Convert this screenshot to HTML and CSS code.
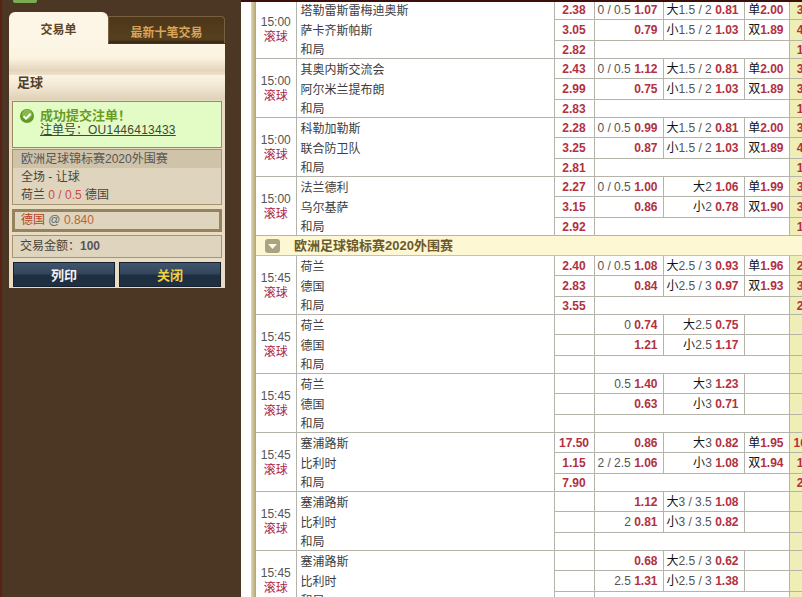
FILE: index.html
```html
<!DOCTYPE html>
<html lang="zh-CN">
<head>
    <meta charset="UTF-8">
    <title>交易单</title>
    <link rel="stylesheet" href="styles.css">
</head>
<body>
    <div class="page">
        <aside class="sidebar">
            <div class="top-tag"></div>
            <div class="tabs">
                <div class="tab tab-active">交易单</div>
                <div class="tab tab-other">最新十笔交易</div>
            </div>
            <div class="panel">
                <div class="panel-fade"></div>
                <h2 class="sport">足球</h2>

                <div class="box success">
                    <svg class="check" width="14" height="14" viewBox="0 0 14 14">
                        <circle cx="7" cy="7" r="7" fill="#5f9a22"/>
                        <circle cx="7" cy="5.5" r="5" fill="#86ba48"/>
                        <path d="M3.6 7.2 L6 9.6 L10.6 4.8" fill="none" stroke="#fff" stroke-width="2"/>
                    </svg>
                    <div>
                        <div class="success-title">成功提交注单！</div>
                        <div class="success-no">注单号：<span class="order-no">OU1446413433</span></div>
                    </div>
                </div>

                <div class="box info">
                    <div class="info-head">欧洲足球锦标赛2020外围赛</div>
                    <div class="info-line">全场 - 让球</div>
                    <div class="info-line">荷兰 <span class="hdp-red">0 / 0.5</span> 德国</div>
                </div>

                <div class="box pick">
                    <span class="pick-team">德国</span> <span class="pick-at">@</span> <span class="pick-odds">0.840</span>
                </div>

                <div class="box amount">交易金额：<b>100</b></div>

                <div class="buttons">
                    <button class="btn">列印</button>
                    <button class="btn btn-close">关闭</button>
                </div>
            </div>
        </aside>

        <main class="main">
            <div class="edge"></div>
            <div class="board">
                <table class="odds">
                    <colgroup>
                        <col class="c-time"><col class="c-team"><col class="c-odds"><col class="c-hdp"><col class="c-ou"><col class="c-oe"><col class="c-last">
                    </colgroup>
                    <tbody>
                        <tr class="r1">
                            <td class="time" rowspan="3">15:00<br><span class="live">滚球</span></td>
                            <td class="team">塔勒雷斯雷梅迪奥斯</td>
                            <td class="win">2.38</td>
                            <td class="num">0 / 0.5 <b>1.07</b></td>
                            <td class="num"><i>大</i>1.5 / 2 <b>0.81</b></td>
                            <td class="num"><i>单</i><b>2.00</b></td>
                            <td class="last">3.40</td>
                        </tr>
                        <tr class="r2">
                            <td class="team">萨卡齐斯帕斯</td>
                            <td class="win">3.05</td>
                            <td class="num"><b>0.79</b></td>
                            <td class="num"><i>小</i>1.5 / 2 <b>1.03</b></td>
                            <td class="num"><i>双</i><b>1.89</b></td>
                            <td class="last">4.50</td>
                        </tr>
                        <tr class="r3">
                            <td class="team">和局</td>
                            <td class="win">2.82</td>
                            <td colspan="3"></td>
                            <td class="last">1.95</td>
                        </tr>

                        <tr class="r1">
                            <td class="time" rowspan="3">15:00<br><span class="live">滚球</span></td>
                            <td class="team">其奥内斯交流会</td>
                            <td class="win">2.43</td>
                            <td class="num">0 / 0.5 <b>1.12</b></td>
                            <td class="num"><i>大</i>1.5 / 2 <b>0.81</b></td>
                            <td class="num"><i>单</i><b>2.00</b></td>
                            <td class="last">3.30</td>
                        </tr>
                        <tr class="r2">
                            <td class="team">阿尔米兰提布朗</td>
                            <td class="win">2.99</td>
                            <td class="num"><b>0.75</b></td>
                            <td class="num"><i>小</i>1.5 / 2 <b>1.03</b></td>
                            <td class="num"><i>双</i><b>1.89</b></td>
                            <td class="last">3.90</td>
                        </tr>
                        <tr class="r3">
                            <td class="team">和局</td>
                            <td class="win">2.83</td>
                            <td colspan="3"></td>
                            <td class="last">1.90</td>
                        </tr>

                        <tr class="r1">
                            <td class="time" rowspan="3">15:00<br><span class="live">滚球</span></td>
                            <td class="team">科勒加勒斯</td>
                            <td class="win">2.28</td>
                            <td class="num">0 / 0.5 <b>0.99</b></td>
                            <td class="num"><i>大</i>1.5 / 2 <b>0.81</b></td>
                            <td class="num"><i>单</i><b>2.00</b></td>
                            <td class="last">3.20</td>
                        </tr>
                        <tr class="r2">
                            <td class="team">联合防卫队</td>
                            <td class="win">3.25</td>
                            <td class="num"><b>0.87</b></td>
                            <td class="num"><i>小</i>1.5 / 2 <b>1.03</b></td>
                            <td class="num"><i>双</i><b>1.89</b></td>
                            <td class="last">4.60</td>
                        </tr>
                        <tr class="r3">
                            <td class="team">和局</td>
                            <td class="win">2.81</td>
                            <td colspan="3"></td>
                            <td class="last">1.94</td>
                        </tr>

                        <tr class="r1">
                            <td class="time" rowspan="3">15:00<br><span class="live">滚球</span></td>
                            <td class="team">法兰德利</td>
                            <td class="win">2.27</td>
                            <td class="num">0 / 0.5 <b>1.00</b></td>
                            <td class="num"><i>大</i>2 <b>1.06</b></td>
                            <td class="num"><i>单</i><b>1.99</b></td>
                            <td class="last">3.10</td>
                        </tr>
                        <tr class="r2">
                            <td class="team">乌尔基萨</td>
                            <td class="win">3.15</td>
                            <td class="num"><b>0.86</b></td>
                            <td class="num"><i>小</i>2 <b>0.78</b></td>
                            <td class="num"><i>双</i><b>1.90</b></td>
                            <td class="last">3.80</td>
                        </tr>
                        <tr class="r3">
                            <td class="team">和局</td>
                            <td class="win">2.92</td>
                            <td colspan="3"></td>
                            <td class="last">1.88</td>
                        </tr>

                        <tr class="league">
                            <td colspan="7">
                                <div class="league-in">
                                    <svg class="fold" width="15" height="14" viewBox="0 0 15 14">
                                        <rect width="15" height="14" rx="3" fill="#aaa282"/>
                                        <path d="M3 5 H12 L7.5 10 Z" fill="#fbf8e6"/>
                                    </svg>
                                    <span>欧洲足球锦标赛2020外围赛</span>
                                </div>
                            </td>
                        </tr>

                        <tr class="r1">
                            <td class="time" rowspan="3">15:45<br><span class="live">滚球</span></td>
                            <td class="team">荷兰</td>
                            <td class="win">2.40</td>
                            <td class="num">0 / 0.5 <b>1.08</b></td>
                            <td class="num"><i>大</i>2.5 / 3 <b>0.93</b></td>
                            <td class="num"><i>单</i><b>1.96</b></td>
                            <td class="last">2.80</td>
                        </tr>
                        <tr class="r2">
                            <td class="team">德国</td>
                            <td class="win">2.83</td>
                            <td class="num"><b>0.84</b></td>
                            <td class="num"><i>小</i>2.5 / 3 <b>0.97</b></td>
                            <td class="num"><i>双</i><b>1.93</b></td>
                            <td class="last">3.40</td>
                        </tr>
                        <tr class="r3">
                            <td class="team">和局</td>
                            <td class="win">3.55</td>
                            <td colspan="3"></td>
                            <td class="last">2.20</td>
                        </tr>

                        <tr class="r1">
                            <td class="time" rowspan="3">15:45<br><span class="live">滚球</span></td>
                            <td class="team">荷兰</td>
                            <td class="win"></td>
                            <td class="num">0 <b>0.74</b></td>
                            <td class="num"><i>大</i>2.5 <b>0.75</b></td>
                            <td></td>
                            <td class="last"></td>
                        </tr>
                        <tr class="r2">
                            <td class="team">德国</td>
                            <td class="win"></td>
                            <td class="num"><b>1.21</b></td>
                            <td class="num"><i>小</i>2.5 <b>1.17</b></td>
                            <td></td>
                            <td class="last"></td>
                        </tr>
                        <tr class="r3">
                            <td class="team">和局</td>
                            <td class="win"></td>
                            <td colspan="3"></td>
                            <td class="last"></td>
                        </tr>

                        <tr class="r1">
                            <td class="time" rowspan="3">15:45<br><span class="live">滚球</span></td>
                            <td class="team">荷兰</td>
                            <td class="win"></td>
                            <td class="num">0.5 <b>1.40</b></td>
                            <td class="num"><i>大</i>3 <b>1.23</b></td>
                            <td></td>
                            <td class="last"></td>
                        </tr>
                        <tr class="r2">
                            <td class="team">德国</td>
                            <td class="win"></td>
                            <td class="num"><b>0.63</b></td>
                            <td class="num"><i>小</i>3 <b>0.71</b></td>
                            <td></td>
                            <td class="last"></td>
                        </tr>
                        <tr class="r3">
                            <td class="team">和局</td>
                            <td class="win"></td>
                            <td colspan="3"></td>
                            <td class="last"></td>
                        </tr>

                        <tr class="r1">
                            <td class="time" rowspan="3">15:45<br><span class="live">滚球</span></td>
                            <td class="team">塞浦路斯</td>
                            <td class="win">17.50</td>
                            <td class="num"><b>0.86</b></td>
                            <td class="num"><i>大</i>3 <b>0.82</b></td>
                            <td class="num"><i>单</i><b>1.95</b></td>
                            <td class="last">16.00</td>
                        </tr>
                        <tr class="r2">
                            <td class="team">比利时</td>
                            <td class="win">1.15</td>
                            <td class="num">2 / 2.5 <b>1.06</b></td>
                            <td class="num"><i>小</i>3 <b>1.08</b></td>
                            <td class="num"><i>双</i><b>1.94</b></td>
                            <td class="last">1.20</td>
                        </tr>
                        <tr class="r3">
                            <td class="team">和局</td>
                            <td class="win">7.90</td>
                            <td colspan="3"></td>
                            <td class="last">2.60</td>
                        </tr>

                        <tr class="r1">
                            <td class="time" rowspan="3">15:45<br><span class="live">滚球</span></td>
                            <td class="team">塞浦路斯</td>
                            <td class="win"></td>
                            <td class="num"><b>1.12</b></td>
                            <td class="num"><i>大</i>3 / 3.5 <b>1.08</b></td>
                            <td></td>
                            <td class="last"></td>
                        </tr>
                        <tr class="r2">
                            <td class="team">比利时</td>
                            <td class="win"></td>
                            <td class="num">2 <b>0.81</b></td>
                            <td class="num"><i>小</i>3 / 3.5 <b>0.82</b></td>
                            <td></td>
                            <td class="last"></td>
                        </tr>
                        <tr class="r3">
                            <td class="team">和局</td>
                            <td class="win"></td>
                            <td colspan="3"></td>
                            <td class="last"></td>
                        </tr>

                        <tr class="r1">
                            <td class="time" rowspan="3">15:45<br><span class="live">滚球</span></td>
                            <td class="team">塞浦路斯</td>
                            <td class="win"></td>
                            <td class="num"><b>0.68</b></td>
                            <td class="num"><i>大</i>2.5 / 3 <b>0.62</b></td>
                            <td></td>
                            <td class="last"></td>
                        </tr>
                        <tr class="r2">
                            <td class="team">比利时</td>
                            <td class="win"></td>
                            <td class="num">2.5 <b>1.31</b></td>
                            <td class="num"><i>小</i>2.5 / 3 <b>1.38</b></td>
                            <td></td>
                            <td class="last"></td>
                        </tr>
                        <tr class="r3">
                            <td class="team">和局</td>
                            <td class="win"></td>
                            <td colspan="3"></td>
                            <td class="last"></td>
                        </tr>
                    </tbody>
                </table>
            </div>
            <div class="top-band"></div>
        </main>
    </div>
</body>
</html>
```

FILE: styles.css
```css
html, body {
    margin: 0;
    height: 100%;
    overflow: hidden;
}
body {
    font-family: "Liberation Sans", "Noto Sans CJK SC", sans-serif;
    font-size: 12px;
    color: #444;
    background: #fff;
}
.page {
    display: flex;
    height: 597px;
    overflow: hidden;
}

/* left column */
.sidebar {
    flex: 0 0 239px;
    box-sizing: content-box;
    border-left: 2px solid #5c2014;
    background: #4b3723;
}
.top-tag {
    width: 24px;
    height: 3px;
    margin: 0 0 9px 11px;
    background: #79ab52;
    border-radius: 0 0 2px 2px;
}
.tabs {
    display: flex;
    align-items: flex-end;
    width: 216px;
    margin-left: 7px;
}
.tab {
    text-align: center;
    font-weight: bold;
}
.tab-active {
    width: 99px;
    height: 32px;
    line-height: 36px;
    background: #fdf6e7;
    color: #5a4526;
    border-radius: 6px 6px 0 0;
}
.tab-other {
    width: 117px;
    height: 27px;
    margin-bottom: 1px;
    line-height: 32px;
    box-sizing: border-box;
    background: linear-gradient(#4d3619, #57401f 85%, #33230f);
    border: 1px solid #76603f;
    border-bottom: 0;
    border-radius: 0 4px 0 0;
    color: #d9a55b;
}
.panel {
    width: 216px;
    height: 244px;
    margin-left: 7px;
    background: #e8dcc5;
}
.panel-fade {
    height: 31px;
    background: linear-gradient(#fdf5e5, #fbf2e0 45%, #e3d5bb 85%, #ece1cb);
}
.sport {
    height: 25px;
    margin: 0;
    padding-left: 8px;
    line-height: 15px;
    font-size: 13px;
    font-weight: bold;
    color: #4d4030;
    background: linear-gradient(#fbf3e2, #f3e9d5 40%, #dfd1b6);
}
.box {
    box-sizing: border-box;
    width: 210px;
    margin: 0 3px;
    border: 1px solid #a8946a;
    background: #dfd5bf;
}
.success {
    display: flex;
    gap: 6px;
    height: 47px;
    margin-top: 1px;
    padding: 6px 0 0 7px;
    border-color: #9a8c5c;
    background: #e3fcc6;
}
.check {
    margin-top: 1px;
}
.success-title {
    font-size: 13px;
    font-weight: bold;
    line-height: 15px;
    color: #6a9a24;
}
.success-no {
    line-height: 14px;
    color: #3b4a32;
    text-decoration: underline;
}
.order-no {
    letter-spacing: 0.25px;
}
.info {
    height: 56px;
    margin-top: 1px;
}
.info-head {
    height: 18px;
    padding-left: 8px;
    line-height: 18px;
    background: #cfc3a9;
    color: #555;
}
.info-line {
    height: 18px;
    padding-left: 8px;
    line-height: 18px;
    color: #4a4438;
}
.hdp-red {
    color: #cf4a48;
}
.pick {
    height: 23px;
    margin-top: 4px;
    padding-left: 6px;
    border: 3px solid #96835c;
    line-height: 17px;
}
.pick-team {
    color: #b8401e;
}
.pick-at {
    color: #666;
}
.pick-odds {
    color: #c0603a;
}
.amount {
    height: 23px;
    margin-top: 3px;
    padding-left: 7px;
    line-height: 20px;
    color: #4a4438;
}
.amount b {
    color: #555;
}
.buttons {
    display: flex;
    gap: 4px;
    margin: 4px 0 0 4px;
}
.btn {
    width: 102px;
    height: 25px;
    padding: 0;
    font: bold 13px "Liberation Sans", "Noto Sans CJK SC", sans-serif;
    color: #f4f4f4;
    background: linear-gradient(#40566e, #33475c 45%, #1d2e40 55%, #1f3042);
    border: 1px solid #14202c;
}
.btn-close {
    color: #eed23e;
}

/* odds board */
.main {
    position: relative;
    flex: 1;
    display: flex;
    min-width: 0;
    padding-left: 10px;
    overflow: hidden;
    background: #fff;
}
.edge {
    flex: 0 0 5px;
    background: linear-gradient(90deg, #dcd6bb, #b3a568);
}
.board {
    flex: 1;
    min-width: 0;
    overflow: hidden;
}
.top-band {
    position: absolute;
    top: 0;
    left: 0;
    right: 0;
    height: 2px;
    background: #3c0f0a;
}
.odds {
    table-layout: fixed;
    width: 572px;
    margin-top: -1px;
    border-collapse: collapse;
}
.c-time { width: 40px; }
.c-team { width: 258px; }
.c-odds { width: 40px; }
.c-hdp { width: 69px; }
.c-ou { width: 81px; }
.c-oe { width: 45px; }
.c-last { width: 39px; }
.odds td {
    padding: 0;
    line-height: 16px;
    white-space: nowrap;
    overflow: hidden;
    border: 1px solid #b4b4aa;
}
.r1 { height: 20px; }
.r2 { height: 21px; }
.r3 { height: 18px; }
.odds td.time {
    padding-top: 2px;
    text-align: center;
    line-height: 15px;
    border-left: 0;
    color: #555;
}
.live {
    color: #a92440;
}
.odds td.team {
    padding: 1px 0 0 4px;
    color: #3d3d3d;
}
.odds .r1 td.team {
    padding-top: 2px;
}
.r2 td.team,
.r3 td.team {
    border-top: 0;
}
.r1 td.team,
.r2 td.team {
    border-bottom: 0;
}
.win {
    text-align: center;
    font-weight: bold;
    color: #b3303f;
}
.odds td.num {
    padding-right: 5px;
    text-align: right;
    color: #555;
}
.num b {
    color: #b3303f;
}
.num i {
    font-style: normal;
    color: #111;
}
.odds td.last {
    text-align: center;
    font-weight: bold;
    color: #b3303f;
    background: #eeeeb6;
}
.league {
    height: 20px;
}
.odds .league td {
    background: #fdf8d3;
    border: 1px solid #cdc494;
    border-left: 0;
}
.league-in {
    display: flex;
    align-items: center;
    gap: 14px;
    padding-left: 9px;
    font-size: 13px;
    font-weight: bold;
    color: #6b5a2c;
}
```
